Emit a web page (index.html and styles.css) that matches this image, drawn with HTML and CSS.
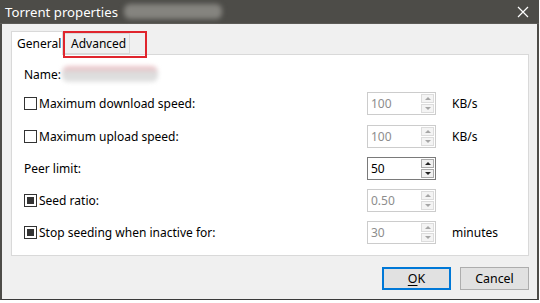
FILE: index.html
```html
<!DOCTYPE html>
<html>
<head>
<meta charset="utf-8">
<link rel="stylesheet" href="styles.css">
</head>
<body>
<div class="window">
  <div class="titlebar">
    <span class="title">Torrent properties</span>
    <span class="title-blur"></span>
    <svg class="close" width="12" height="12" viewBox="0 0 12 12"><path d="M1 1 L11 11 M11 1 L1 11" stroke="#fff" stroke-width="1.2" fill="none"/></svg>
  </div>
  <div class="client">
    <div class="tabs">
      <div class="tab active">General</div>
      <div class="tab">Advanced</div>
      <div class="highlight"></div>
    </div>
    <div class="pane">
      <div class="name-row"><span>Name:</span><span class="name-blur"></span></div>

      <label class="lbl"><span class="cb"></span>Maximum download speed:</label>
      <div class="spin disabled"><span class="val">100</span><span class="arrows"><span class="up"></span><span class="down"></span></span></div>
      <span class="unit">KB/s</span>

      <label class="lbl"><span class="cb"></span>Maximum upload speed:</label>
      <div class="spin disabled"><span class="val">100</span><span class="arrows"><span class="up"></span><span class="down"></span></span></div>
      <span class="unit">KB/s</span>

      <label class="lbl plain">Peer limit:</label>
      <div class="spin"><span class="val">50</span><span class="arrows"><span class="up"></span><span class="down"></span></span></div>
      <span class="unit"></span>

      <label class="lbl"><span class="cb checked"></span>Seed ratio:</label>
      <div class="spin disabled"><span class="val">0.50</span><span class="arrows"><span class="up"></span><span class="down"></span></span></div>
      <span class="unit"></span>

      <label class="lbl"><span class="cb checked"></span>Stop seeding when inactive for:</label>
      <div class="spin disabled"><span class="val">30</span><span class="arrows"><span class="up"></span><span class="down"></span></span></div>
      <span class="unit">minutes</span>
    </div>
    <div class="buttons">
      <button class="btn default"><u>O</u>K</button>
      <button class="btn">Cancel</button>
    </div>
  </div>
</div>
</body>
</html>
```

FILE: styles.css
```css
* { box-sizing: border-box; }
html, body { margin: 0; padding: 0; background: #ffffff; }
body { width: 540px; height: 303px; overflow: hidden; font-family: "Noto Sans", "Liberation Sans", sans-serif; font-size: 12px; color: #000; }

.window {
  width: 539px;
  height: 300px;
  background: #f0f0f0;
  border-left: 2px solid #4d4c48;
  border-right: 2px solid #4d4c48;
  border-bottom: 1px solid #3a3a3a;
  display: flex;
  flex-direction: column;
}

.titlebar {
  height: 24px;
  background: #4d4c48;
  color: #ffffff;
  display: flex;
  align-items: center;
  padding-left: 5px;
  padding-right: 10px;
  margin-left: -2px;
  margin-right: -2px;
  border-bottom: 1px solid #5c5b57;
}
.title { font-size: 13.2px; }
.title-blur {
  display: inline-block;
  width: 98px;
  height: 15px;
  margin-left: 6px;
  background: #85847f;
  border-radius: 6px;
  filter: blur(2.5px);
}
.close { margin-left: auto; }

.client {
  flex: 1;
  padding: 7px 8px 0 9px;
  display: flex;
  flex-direction: column;
}

.tabs {
  height: 24px;
  display: flex;
  align-items: flex-end;
  position: relative;
  margin-bottom: -1px;
  z-index: 1;
}
.tab {
  height: 21px;
  padding: 0 0 0 7px;
  border: 1px solid #d9d9d9;
  border-bottom: none;
  background: #f0f0f0;
  display: flex;
  align-items: center;
  font-size: 12px;
  white-space: nowrap;
}
.tab:nth-child(2) { width: 67px; border-left: none; height: 21px; margin-bottom: 1px; border-bottom: 1px solid #d9d9d9; padding-left: 8px; }
.tab.active { height: 24px; width: 52px; background: #ffffff; padding-left: 5px; }
.highlight {
  position: absolute;
  left: 52px;
  top: 0px;
  width: 84px;
  height: 27px;
  border: 2px solid #e0252d;
}

.pane {
  height: 202px;
  background: #ffffff;
  border: 1px solid #d9d9d9;
  padding: 10px 0 0 12px;
  display: grid;
  grid-template-columns: 343px 69px 1fr;
  grid-template-rows: 18px repeat(5, 23px);
  row-gap: 9.25px;
  align-items: center;
}
.pane > .name-row { grid-column: 1 / 4; display: flex; align-items: center; }
.name-blur {
  display: inline-block;
  width: 96px;
  height: 16px;
  margin-left: 1px;
  background: linear-gradient(#efbfc4, #dcdcdc 45%, #e2e2e2);
  border-radius: 6px;
  filter: blur(2px);
}

.lbl { display: flex; align-items: center; }
.cb {
  width: 13px;
  height: 13px;
  border: 1px solid #333333;
  background: #ffffff;
  margin-right: 2px;
  display: inline-flex;
  align-items: center;
  justify-content: center;
}
.cb.checked::after {
  content: "";
  width: 7px;
  height: 7px;
  background: #333333;
}

.spin {
  height: 23px;
  border: 1px solid #7a7a7a;
  background: #ffffff;
  display: flex;
  align-items: center;
  padding-left: 3px;
}
.spin .val { flex: 1; }
.spin.disabled { border-color: #cccccc; color: #8d8d8d; }
.arrows {
  width: 14px;
  height: 100%;
  display: flex;
  flex-direction: column;
  padding: 1px 1px 1px 0;
  gap: 1px;
}
.arrows span {
  flex: 1;
  border: 1px solid #a9a9a9;
  background: #f0f0f0;
  display: flex;
  align-items: center;
  justify-content: center;
}
.spin.disabled .arrows span { border-color: #dcdcdc; background: #f4f4f4; }
.arrows .up::after {
  content: "";
  border-left: 3px solid transparent;
  border-right: 3px solid transparent;
  border-bottom: 3px solid #222;
}
.arrows .down::after {
  content: "";
  border-left: 3px solid transparent;
  border-right: 3px solid transparent;
  border-top: 3px solid #222;
}
.spin.disabled .arrows .up::after { border-bottom-color: #a6a6a6; }
.spin.disabled .arrows .down::after { border-top-color: #a6a6a6; }

.unit { padding-left: 16px; }

.buttons {
  display: flex;
  justify-content: flex-end;
  gap: 9px;
  padding-top: 11px;
}
.btn {
  width: 69px;
  height: 23px;
  font-family: "Noto Sans", "Liberation Sans", sans-serif;
  font-size: 12.4px;
  background: #e1e1e1;
  border: 1px solid #adadad;
  color: #000;
  padding: 0;
}
.btn.default { border: 2px solid #0078d7; }
.btn u { text-decoration-thickness: 1px; text-underline-offset: 2px; }
```
